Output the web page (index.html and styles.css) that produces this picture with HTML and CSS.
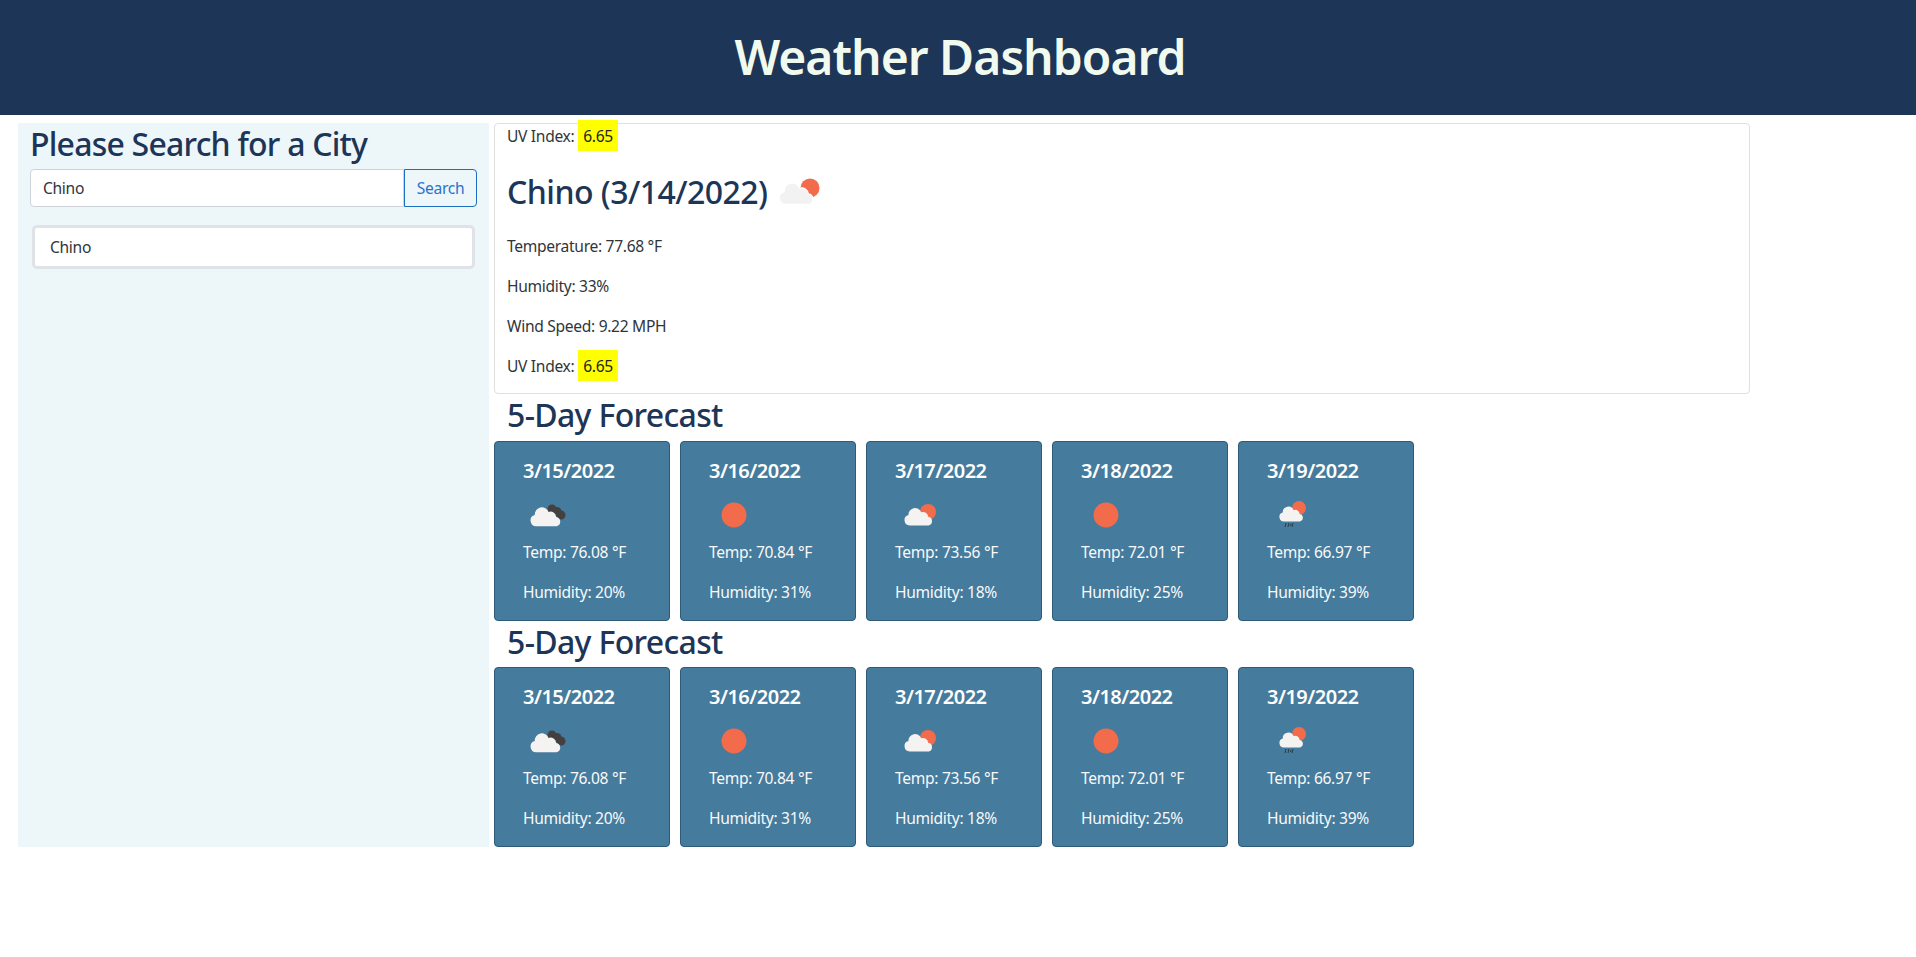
FILE: index.html
```html
<!DOCTYPE html>
<html lang="en">
<head>
<meta charset="utf-8">
<title>Weather Dashboard</title>
<link rel="stylesheet" href="styles.css">
</head>
<body>
<svg class="defs" width="0" height="0" aria-hidden="true">
  <defs>
    <path id="cloud" d="M12 36a6 6 0 0 1-1.500-11.800A7.500 7.500 0 0 1 25 21a6 6 0 0 1 8 5.200A5 5 0 0 1 33.500 36z"/>
    <symbol id="i-main" viewBox="0 0 50 50">
      <circle class="sun" cx="36" cy="21" r="9.500"/>
      <use href="#cloud" class="cloud-pale" transform="translate(-1 -1.200) scale(1.07)"/>
    </symbol>
    <symbol id="i-broken" viewBox="0 0 50 50">
      <g class="cloud-dark"><circle cx="29" cy="19" r="4.500"/><circle cx="34" cy="21.500" r="4.500"/><circle cx="38" cy="25" r="4.500"/></g>
      <use href="#cloud" class="cloud-white" transform="translate(1.800 2) scale(.95)"/>
    </symbol>
    <symbol id="i-clear" viewBox="0 0 50 50">
      <circle class="sun" cx="25" cy="25" r="12.500"/>
    </symbol>
    <symbol id="i-few" viewBox="0 0 50 50">
      <circle class="sun" cx="33" cy="22" r="8"/>
      <use href="#cloud" class="cloud-white" transform="translate(4.200 3.800) scale(.88)"/>
    </symbol>
    <symbol id="i-rain" viewBox="0 0 50 50">
      <circle class="sun" cx="32" cy="18" r="7"/>
      <use href="#cloud" class="cloud-white" transform="translate(7.900 4.400) scale(.75)"/>
      <path class="rain" d="M19 33l-1 4M22 33l-1 4M26 33l-1 4M24 34l-.5 2"/>
    </symbol>
  </defs>
</svg>

<header class="site-header"><h1>Weather Dashboard</h1></header>

<div class="layout">
  <aside class="sidebar">
    <h2 class="sidebar-title">Please Search for a City</h2>
    <form class="search">
      <input class="search-input" type="text" value="Chino">
      <button class="search-btn" type="button">Search</button>
    </form>
    <ul class="history"><li>Chino</li></ul>
  </aside>

  <main class="main">
    <section class="today">
      <p>UV Index: <span class="uv">6.65</span></p>
      <h2 class="today-title">Chino (3/14/2022) <svg class="icon"><use href="#i-main"/></svg></h2>
      <p>Temperature: 77.68 °F</p>
      <p>Humidity: 33%</p>
      <p>Wind Speed: 9.22 MPH</p>
      <p>UV Index: <span class="uv">6.65</span></p>
    </section>

    <h2 class="forecast-title">5-Day Forecast</h2>
    <div class="forecast">
      <article class="day"><h5>3/15/2022</h5><svg class="icon"><use href="#i-broken"/></svg><p>Temp: 76.08 °F</p><p>Humidity: 20%</p></article>
      <article class="day"><h5>3/16/2022</h5><svg class="icon"><use href="#i-clear"/></svg><p>Temp: 70.84 °F</p><p>Humidity: 31%</p></article>
      <article class="day"><h5>3/17/2022</h5><svg class="icon"><use href="#i-few"/></svg><p>Temp: 73.56 °F</p><p>Humidity: 18%</p></article>
      <article class="day"><h5>3/18/2022</h5><svg class="icon"><use href="#i-clear"/></svg><p>Temp: 72.01 °F</p><p>Humidity: 25%</p></article>
      <article class="day"><h5>3/19/2022</h5><svg class="icon"><use href="#i-rain"/></svg><p>Temp: 66.97 °F</p><p>Humidity: 39%</p></article>
    </div>

    <h2 class="forecast-title">5-Day Forecast</h2>
    <div class="forecast">
      <article class="day"><h5>3/15/2022</h5><svg class="icon"><use href="#i-broken"/></svg><p>Temp: 76.08 °F</p><p>Humidity: 20%</p></article>
      <article class="day"><h5>3/16/2022</h5><svg class="icon"><use href="#i-clear"/></svg><p>Temp: 70.84 °F</p><p>Humidity: 31%</p></article>
      <article class="day"><h5>3/17/2022</h5><svg class="icon"><use href="#i-few"/></svg><p>Temp: 73.56 °F</p><p>Humidity: 18%</p></article>
      <article class="day"><h5>3/18/2022</h5><svg class="icon"><use href="#i-clear"/></svg><p>Temp: 72.01 °F</p><p>Humidity: 25%</p></article>
      <article class="day"><h5>3/19/2022</h5><svg class="icon"><use href="#i-rain"/></svg><p>Temp: 66.97 °F</p><p>Humidity: 39%</p></article>
    </div>
  </main>
</div>
</body>
</html>
```
FILE: styles.css
```css
* { box-sizing: border-box; }
html, body { margin: 0; padding: 0; }
body {
  font-family: "Noto Sans", "Open Sans", sans-serif;
  font-size: 15.6px;
  line-height: 24px;
  color: #30353a;
  background: #fff;
  letter-spacing: -0.02em;
}
.defs { position: absolute; }
h1, h2, h5, p, ul { margin: 0; padding: 0; }
h2 {
  font-size: 32px;
  line-height: 38.4px;
  font-weight: 500;
  color: #1d3557;
  margin-bottom: 8px;
}

.site-header {
  background: #1d3557;
  height: 115px;
  display: flex;
  align-items: center;
  justify-content: center;
  padding: 0 0 2px 4px;
}
.site-header h1 {
  font-size: 48px;
  line-height: 58px;
  font-weight: 600;
  color: #f1faee;
  letter-spacing: -0.97px;
}

.layout {
  display: flex;
  gap: 5px;
  margin: 8px 0 0 18px;
  align-items: stretch;
}
.sidebar {
  width: 471px;
  background: #edf6f9;
  padding: 0 12px;
}
.sidebar-title {
  letter-spacing: -0.78px;
  padding-top: 2px;
  margin-bottom: 6px;
}
.search { display: flex; }
.search-input {
  width: 374px;
  height: 38px;
  padding: 6px 12px;
  border: 1px solid #ced4da;
  border-radius: 4px 0 0 4px;
  background: #fff;
  color: inherit;
  font: inherit;
  letter-spacing: inherit;
}
.search-btn {
  width: 73px;
  height: 38px;
  padding: 0;
  border: 1px solid #1b6ec2;
  border-radius: 0 4px 4px 0;
  background: transparent;
  color: #2a72d0;
  font: inherit;
  letter-spacing: inherit;
}
.history {
  list-style: none;
  margin: 18px 0 0 2px;
  width: 443px;
}
.history li {
  height: 44px;
  padding: 7px 15px;
  background: #fff;
  border: 3px solid #dfe3e8;
  border-radius: 5px;
}

.main { width: 1256px; }
.today {
  height: 271px;
  padding: 0 12px;
  border: 1px solid #dfdfdf;
  border-radius: 4px;
  margin-bottom: 0.6px;
}
.today p { margin-bottom: 16px; }
.today-title {
  display: flex;
  align-items: center;
  gap: 6px;
  height: 62px;
  padding-bottom: 6px;
  margin-bottom: 8px;
  letter-spacing: -0.54px;
}
.uv {
  display: inline-block;
  padding: 4px 5px 3px;
  margin: -4px 0 -3px;
  background: #ff0;
  color: #212529;
}
.forecast-title {
  padding: 1.500px 0 0 13px;
  margin-bottom: 6.500px;
  letter-spacing: -0.67px;
}
.forecast { display: flex; gap: 10px; }
.day {
  width: 176px;
  height: 180px;
  padding: 16px 12px 0 28px;
  background: #457b9d;
  border: 1px solid #2f5a78;
  border-radius: 4px;
  color: #f8f9fa;
}
.day h5 {
  font-size: 20px;
  line-height: 24px;
  font-weight: 600;
  color: #fff;
  padding-top: 1px;
  margin-bottom: 7px;
  letter-spacing: -0.5px;
}
.day p { margin-bottom: 16px; }
.icon { display: block; width: 50px; height: 50px; flex: none; }
.sun { fill: #f26b4a; }
.cloud-white { fill: #f5f3f2; }
.cloud-pale { fill: #f2f2f2; stroke: #fff; stroke-width: 1; }
.cloud-dark { fill: #454040; }
.rain { stroke: #2b3a44; stroke-width: 1; fill: none; }
```
